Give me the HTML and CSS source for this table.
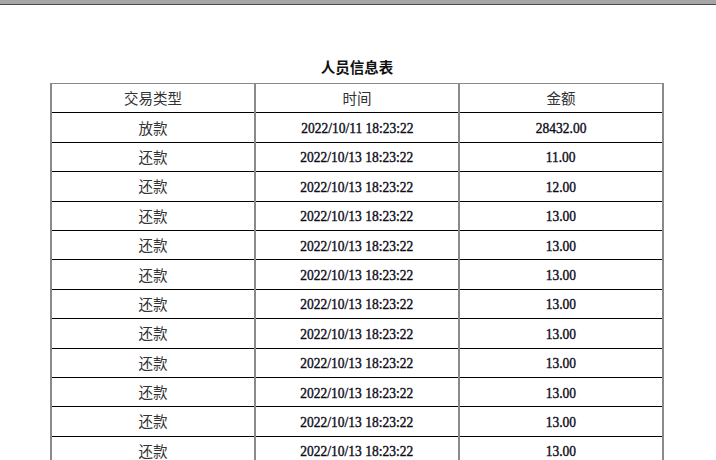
FILE: index.html
```html
<!DOCTYPE html>
<html lang="zh">
<head>
<meta charset="utf-8">
<title>人员信息表</title>
<link rel="stylesheet" href="styles.css">
</head>
<body>
<div class="topbar"></div>
<main class="page">
  <h1 class="title">人员信息表</h1>
  <table class="grid">
    <thead>
      <tr><th>交易类型</th><th>时间</th><th>金额</th></tr>
    </thead>
    <tbody>
      <tr><td>放款</td><td class="num"><span>2022/10/11 18:23:22</span></td><td class="num"><span>28432.00</span></td></tr>
      <tr><td>还款</td><td class="num"><span>2022/10/13 18:23:22</span></td><td class="num"><span>11.00</span></td></tr>
      <tr><td>还款</td><td class="num"><span>2022/10/13 18:23:22</span></td><td class="num"><span>12.00</span></td></tr>
      <tr><td>还款</td><td class="num"><span>2022/10/13 18:23:22</span></td><td class="num"><span>13.00</span></td></tr>
      <tr><td>还款</td><td class="num"><span>2022/10/13 18:23:22</span></td><td class="num"><span>13.00</span></td></tr>
      <tr><td>还款</td><td class="num"><span>2022/10/13 18:23:22</span></td><td class="num"><span>13.00</span></td></tr>
      <tr><td>还款</td><td class="num"><span>2022/10/13 18:23:22</span></td><td class="num"><span>13.00</span></td></tr>
      <tr><td>还款</td><td class="num"><span>2022/10/13 18:23:22</span></td><td class="num"><span>13.00</span></td></tr>
      <tr><td>还款</td><td class="num"><span>2022/10/13 18:23:22</span></td><td class="num"><span>13.00</span></td></tr>
      <tr><td>还款</td><td class="num"><span>2022/10/13 18:23:22</span></td><td class="num"><span>13.00</span></td></tr>
      <tr><td>还款</td><td class="num"><span>2022/10/13 18:23:22</span></td><td class="num"><span>13.00</span></td></tr>
      <tr><td>还款</td><td class="num"><span>2022/10/13 18:23:22</span></td><td class="num"><span>13.00</span></td></tr>
      <tr><td>还款</td><td class="num"><span>2022/10/13 18:23:22</span></td><td class="num"><span>13.00</span></td></tr>
    </tbody>
  </table>
</main>
</body>
</html>
```
FILE: styles.css
```css
html, body {
  margin: 0;
  padding: 0;
  background: #fff;
  overflow: hidden;
}
body {
  font-family: "Liberation Serif", "Noto Sans CJK SC", serif;
  color: #111;
}
.topbar {
  height: 4px;
  background: #a6a6a6;
  border-bottom: 1px solid #4a4a4a;
}
.page {
  padding: 52px 0 0 50px;
  width: 614px;
}
.title {
  margin: 0 0 6px;
  height: 20px;
  line-height: 20px;
  text-align: center;
  font-family: "Noto Sans CJK SC", sans-serif;
  font-size: 14.5px;
  font-weight: 700;
  color: #111;
}
.grid {
  width: 614px;
  border-collapse: collapse;
  table-layout: fixed;
}
.grid th,
.grid td {
  box-sizing: border-box;
  height: 29.4px;
  padding: 0;
  border-top: 1px solid #000;
  border-bottom: 1px solid #000;
  border-left: 2px solid #8a8a8a;
  border-right: 2px solid #8a8a8a;
  text-align: center;
  vertical-align: middle;
  font-family: "Noto Sans CJK SC", serif;
  font-size: 14.5px;
  font-weight: 400;
  line-height: 16px;
  color: #333;
}
.grid th {
  border-top-color: #8a8a8a;
}
.grid td.num span {
  display: inline-block;
  font-family: "Liberation Serif", serif;
  font-size: 15px;
  font-weight: 400;
  line-height: 16px;
  color: #0d0d1a;
  transform: scaleX(0.9);
  -webkit-text-stroke: 0.4px #0d0d1a;
}
```
